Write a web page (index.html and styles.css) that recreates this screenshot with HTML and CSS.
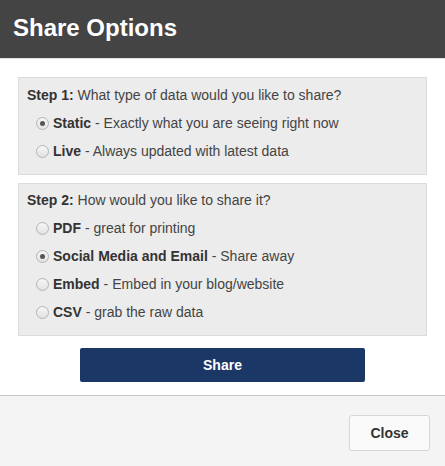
FILE: index.html
```html
<!DOCTYPE html>
<html>
<head>
<meta charset="utf-8">
<link rel="stylesheet" href="styles.css">
</head>
<body>
<div class="dialog">
  <div class="header"><h1 class="title">Share Options</h1></div>
  <div class="body">
    <div class="panel panel-1">
      <div class="step"><b>Step 1:</b> What type of data would you like to share?</div>
      <div class="opt"><span class="radio checked"></span><span><b>Static</b> - Exactly what you are seeing right now</span></div>
      <div class="opt"><span class="radio"></span><span><b>Live</b> - Always updated with latest data</span></div>
    </div>
    <div class="panel panel-2">
      <div class="step"><b>Step 2:</b> How would you like to share it?</div>
      <div class="opt"><span class="radio"></span><span><b>PDF</b> - great for printing</span></div>
      <div class="opt"><span class="radio checked"></span><span><b>Social Media and Email</b> - Share away</span></div>
      <div class="opt"><span class="radio"></span><span><b>Embed</b> - Embed in your blog/website</span></div>
      <div class="opt"><span class="radio"></span><span><b>CSV</b> - grab the raw data</span></div>
    </div>
    <div class="actions"><button class="share-btn">Share</button></div>
  </div>
  <div class="footer"><button class="close-btn">Close</button></div>
</div>
</body>
</html>
```
FILE: styles.css
```css
html, body {
  margin: 0;
  padding: 0;
  background: #ffffff;
}
body {
  font-family: "Liberation Sans", Arial, sans-serif;
  color: #444444;
  font-size: 14px;
}
.dialog {
  width: 445px;
  height: 466px;
  display: flex;
  flex-direction: column;
}
.header {
  height: 58px;
  background: #444444;
  border-bottom: 1px solid #e2e2e2;
  display: flex;
  align-items: center;
  padding-left: 13px;
  box-sizing: content-box;
  flex: none;
}
.title {
  margin: 0;
  color: #ffffff;
  font-size: 24px;
  font-weight: bold;
  line-height: 28px;
  position: relative;
  top: -1px;
}
.body {
  padding: 18px 18px 0 18px;
  height: 336px;
  box-sizing: border-box;
  flex: none;
}
.panel {
  background: #ececec;
  border: 1px solid #dcdcdc;
  padding: 3px 8px 9px 8px;
  line-height: 28px;
}
.panel-2 {
  margin-top: 8px;
  padding-top: 2px;
}
.step b {
  color: #333333;
}
.opt {
  display: flex;
  align-items: center;
  padding-left: 9px;
}
.opt b {
  color: #333333;
}
.radio {
  width: 11px;
  height: 11px;
  border-radius: 50%;
  border: 1px solid #b4b4b4;
  background: linear-gradient(#f6f6f6, #e2e2e2);
  margin-right: 4px;
  flex: none;
  display: flex;
  align-items: center;
  justify-content: center;
}
.radio.checked::after {
  content: "";
  width: 5px;
  height: 5px;
  border-radius: 50%;
  background: #555555;
}
.actions {
  margin-top: 12px;
  padding-left: 62px;
}
.share-btn {
  width: 285px;
  height: 34px;
  background: #1b3766;
  color: #ffffff;
  border: none;
  border-radius: 2px;
  font-family: "Liberation Sans", Arial, sans-serif;
  font-weight: bold;
  font-size: 14px;
  padding: 0;
}
.footer {
  flex: 1;
  background: #f4f4f4;
  border-top: 1px solid #c8c8c8;
  display: flex;
  justify-content: flex-end;
  align-items: flex-start;
  padding: 19px 15px 0 0;
}
.close-btn {
  width: 81px;
  height: 36px;
  background: #fafafa;
  border: 1px solid #d6d6d6;
  border-radius: 3px;
  color: #333333;
  font-family: "Liberation Sans", Arial, sans-serif;
  font-weight: bold;
  font-size: 14px;
  padding: 0;
}
```
